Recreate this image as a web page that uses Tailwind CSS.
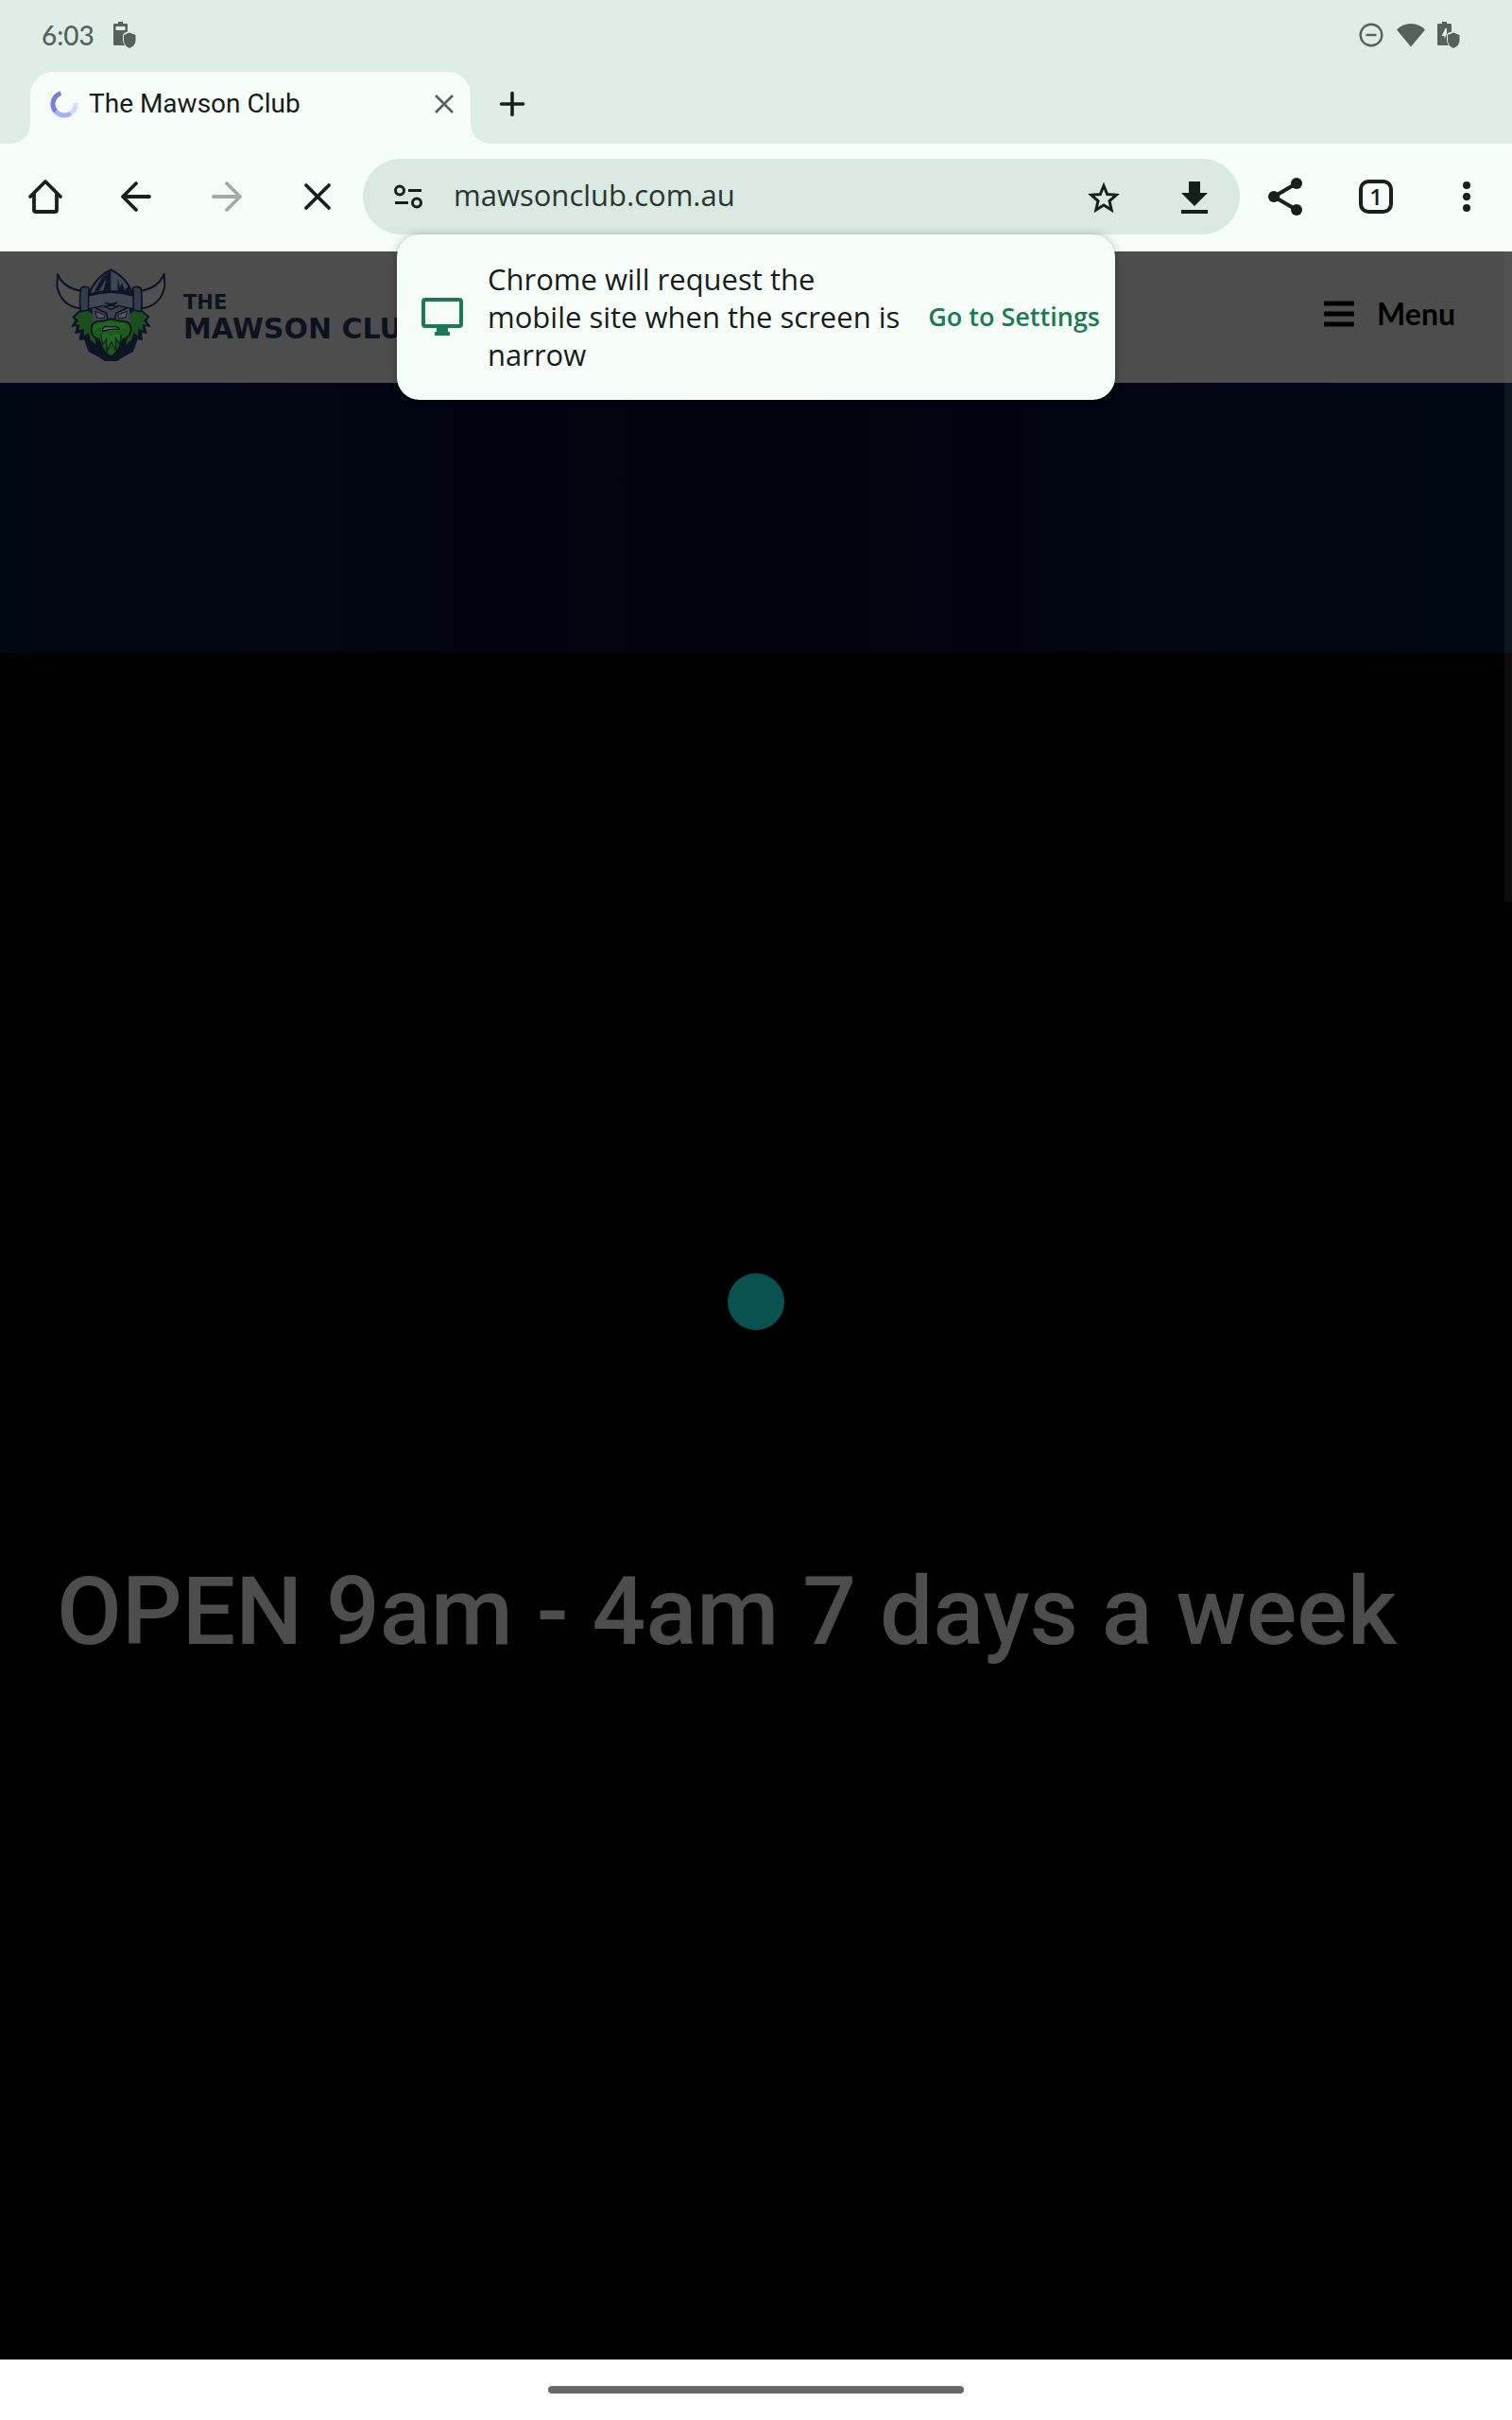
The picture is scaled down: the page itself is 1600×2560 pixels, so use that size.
<!DOCTYPE html>
<html lang="en">
<head>
<meta charset="utf-8">
<meta name="viewport" content="width=device-width, initial-scale=1">
<title>The Mawson Club</title>
<script src="https://cdn.jsdelivr.net/npm/@tailwindcss/browser@4"></script>
</head>
<body class="flex min-h-screen flex-col bg-white font-['Open_Sans',sans-serif] text-[#171d1a]">

<!-- System status bar -->
<div class="flex h-[76px] items-center justify-between bg-[#deede5] pr-[55px] pb-[2px] pl-11 text-[#55625c]">
  <div class="flex items-center gap-5">
    <span class="font-['Lato',sans-serif] text-[28px] leading-8 font-medium">6:03</span>
    <svg class="h-7 w-6" viewBox="0 0 24 28" fill="currentColor" aria-hidden="true">
      <path fill-rule="evenodd" d="M5 0h5v2h4q1 0 1 1v7.500q-5 1.500-5 4v5q0 3 2 5.500H1q-1 0-1-1V3q0-1 1-1h4zM2.500 5v4h10V5z"/>
      <path d="M17 11.500 23.500 14v6q0 5-6.500 8-6-3-6-8v-6z"/>
    </svg>
  </div>
  <div class="flex items-center gap-3">
    <svg class="h-7 w-7" viewBox="0 0 28 28" fill="none" stroke="currentColor" stroke-width="2.400" aria-hidden="true"><circle cx="14" cy="14" r="11.300"/><path d="M8.500 14h11"/></svg>
    <svg class="h-7 w-8" viewBox="0 0 32 28" fill="currentColor" aria-hidden="true"><path d="M16 26.500 1 8.500Q7 2 16 2t15 6.500z"/></svg>
    <svg class="h-7 w-6" viewBox="0 0 24 28" fill="currentColor" aria-hidden="true">
      <path fill-rule="evenodd" d="M5 0h5v2h4q1 0 1 1v7.500q-5 1.500-5 4v5q0 3 2 5.500H1q-1 0-1-1V3q0-1 1-1h4zM8.500 7 4.500 15h3v3l2.500-5V7z"/>
      <path d="M17 11.500 23.500 14v6q0 5-6.500 8-6-3-6-8v-6z"/>
    </svg>
  </div>
</div>

<!-- Tab strip -->
<div class="flex h-[76px] items-end bg-[#deede5] pl-2">
  <svg class="h-6 w-6 fill-[#f6fcf7]" viewBox="0 0 24 24" aria-hidden="true"><path d="M24 0v24H0Q24 24 24 0z"/></svg>
  <div class="flex h-full w-[466px] items-center rounded-t-3xl bg-[#f6fcf7] pr-3 pb-2 pl-5">
    <svg class="h-8 w-8" viewBox="0 0 32 32" fill="none" stroke-width="5" aria-hidden="true">
      <path d="M12.500 4.600A12 12 0 0 0 7 24" stroke="#7680dc"/>
      <path d="M7 24A12 12 0 0 0 23 25.700" stroke="#a5b0f2"/>
      <path d="M23 25.700A12 12 0 0 0 28 15" stroke="#d3dbf7"/>
    </svg>
    <span class="ml-[10px] flex-1 font-['Roboto',sans-serif] text-[28px] leading-10 whitespace-nowrap">The Mawson Club</span>
    <button type="button" aria-label="Close tab" class="flex h-8 w-8 items-center justify-center text-[#55605a]">
      <svg class="h-6 w-6" viewBox="0 0 24 24" fill="none" stroke="currentColor" stroke-width="2.600" aria-hidden="true"><path d="m3 3 18 18M21 3 3 21"/></svg>
    </button>
  </div>
  <svg class="h-6 w-6 fill-[#f6fcf7]" viewBox="0 0 24 24" aria-hidden="true"><path d="M0 0v24h24Q0 24 0 0z"/></svg>
  <button type="button" aria-label="New tab" class="flex h-full w-10 items-center justify-center pb-2">
    <svg class="h-7 w-7" viewBox="0 0 28 28" fill="none" stroke="#14201b" stroke-width="3.600" stroke-linecap="round" aria-hidden="true"><path d="M14 2.500v23M2.500 14h23"/></svg>
  </button>
</div>

<!-- Toolbar -->
<header class="relative z-10 flex h-[114px] items-center bg-[#f6fcf7] pb-[2px]">
  <button type="button" aria-label="Home" class="flex h-20 w-24 items-center justify-center">
    <svg class="h-10 w-10" viewBox="0 0 40 40" fill="none" stroke="#1a1f1c" stroke-width="3.800" stroke-linejoin="round" stroke-linecap="round" aria-hidden="true"><path d="M4 20 20 4l16 16M8 17v17q0 2 2 2h20q2 0 2-2V17"/></svg>
  </button>
  <button type="button" aria-label="Back" class="flex h-20 w-24 items-center justify-center">
    <svg class="h-9 w-9" viewBox="0 0 36 36" fill="none" stroke="#1a1f1c" stroke-width="3.800" stroke-linejoin="round" stroke-linecap="round" aria-hidden="true"><path d="M32 18H4M18 4 4 18l14 14"/></svg>
  </button>
  <button type="button" aria-label="Forward" disabled class="flex h-20 w-24 items-center justify-center">
    <svg class="h-9 w-9" viewBox="0 0 36 36" fill="none" stroke="#a4aaa6" stroke-width="3.800" stroke-linejoin="round" stroke-linecap="round" aria-hidden="true"><path d="M4 18h28M18 4l14 14-14 14"/></svg>
  </button>
  <button type="button" aria-label="Stop loading" class="flex h-20 w-24 items-center justify-center">
    <svg class="h-9 w-9" viewBox="0 0 36 36" fill="none" stroke="#1a1f1c" stroke-width="3.800" stroke-linecap="round" aria-hidden="true"><path d="m6 6 24 24M30 6 6 30"/></svg>
  </button>
  <div class="flex h-20 min-w-0 flex-1 items-center rounded-full bg-[#daeae2]">
    <button type="button" aria-label="Site information" class="flex h-20 w-24 shrink-0 items-center justify-center">
      <svg class="h-7 w-8" viewBox="0 0 32 28" fill="none" stroke="#14201b" stroke-width="3" aria-hidden="true"><circle cx="7" cy="7.500" r="4.500"/><path d="M16 7.500h14M2 20.500h14"/><circle cx="25" cy="20.500" r="4.500"/></svg>
    </button>
    <input type="text" aria-label="Address" value="mawsonclub.com.au" class="h-16 min-w-0 flex-1 bg-transparent pb-1 text-[31px] leading-10 text-[#2b3530] outline-none">
    <button type="button" aria-label="Bookmark" class="flex h-20 w-24 shrink-0 items-center justify-center">
      <svg class="h-10 w-10" viewBox="0 0 40 40" fill="none" stroke="#14201b" stroke-width="3" aria-hidden="true"><path d="m20 8.500 3.700 9 9.600.8-7.300 6.300 2.200 9.400-8.200-5-8.200 5L14 24.600l-7.300-6.300 9.600-.8z"/></svg>
    </button>
    <button type="button" aria-label="Download" class="flex h-20 w-24 shrink-0 items-center justify-center">
      <svg class="h-9 w-9" viewBox="0 0 36 36" fill="#14201b" aria-hidden="true"><path d="M12 2h12v12h8L18 28 4 14h8zM4 32h28v4H4z"/></svg>
    </button>
  </div>
  <button type="button" aria-label="Share" class="flex h-20 w-24 items-center justify-center">
    <svg class="h-10 w-10" viewBox="0 0 40 40" fill="#1a1f1c" stroke="#1a1f1c" aria-hidden="true"><path d="M32 6 8 20l24 14" fill="none" stroke-width="4"/><g stroke="none"><circle cx="32" cy="6" r="6"/><circle cx="8" cy="20" r="6"/><circle cx="32" cy="34" r="6"/></g></svg>
  </button>
  <button type="button" aria-label="Switch tabs" class="flex h-20 w-24 items-center justify-center">
    <span class="flex h-9 w-9 items-center justify-center rounded-[10px] border-4 border-[#1a1f1c] text-2xl leading-none font-semibold">1</span>
  </button>
  <button type="button" aria-label="More options" class="flex h-20 w-24 items-center justify-center">
    <svg class="h-9 w-9" viewBox="0 0 36 36" fill="#1a1f1c" aria-hidden="true"><circle cx="18" cy="6" r="4"/><circle cx="18" cy="18" r="4"/><circle cx="18" cy="30" r="4"/></svg>
  </button>

  <!-- Message card -->
  <div role="status" class="absolute top-24 left-1/2 flex h-[175px] w-[760px] -translate-x-1/2 items-center rounded-3xl bg-[#f6fcf7] pr-4 pb-[2px] pl-6 shadow-[0_0_8px_rgba(0,0,0,0.25)]">
    <svg class="h-12 w-12 shrink-0" viewBox="0 0 48 48" fill="#1b7a54" aria-hidden="true"><path fill-rule="evenodd" d="M6 4h36q4 0 4 4v24q0 4-4 4H30v4h2v4H16v-4h2v-4H6q-4 0-4-4V8q0-4 4-4zm0 4v24h36V8z"/></svg>
    <p class="ml-6 flex-1 text-[31px] leading-10">Chrome will request the<br>mobile site when the screen is<br>narrow</p>
    <button type="button" class="shrink-0 text-[27px] leading-10 font-semibold text-[#1b7a54]">Go to Settings</button>
  </div>
</header>

<!-- Web page -->
<main class="relative flex flex-1 flex-col bg-black">
  <div class="flex h-[139px] items-center justify-between bg-[#4d4d4d] pr-[60px] pb-2 pl-[58px]">
    <a href="#" class="flex items-center gap-4 text-[#0d131e]">
      <svg class="h-[100px] w-[120px]" viewBox="55 50 360 300" stroke-linejoin="round" aria-hidden="true">
        <g fill="#505050" stroke="#0c1220" stroke-width="6">
          <path d="M64 74Q82 118 139 127L137 183Q74 175 62 112Z"/>
          <path d="M402 74Q384 118 327 127L330 183Q392 175 404 112Z"/>
        </g>
        <path d="M134 187 110 210l9 11-13 20 18-1-6 24 17-4-3 24 16-2 14 38 32 17 39 26 39-26 32-17 14-38 16 2-3-24 17 4-6-24 18 1-13-20 9-11-24-23-50-8H184z" fill="#0d1422"/>
        <path d="m136 193-18 18 13 10-12 14 15-1-3 19 16-6 1 23 14-10 6 22 18 16-8-46 8-44-30-19zM331 193l18 18-13 10 12 14-15-1 3 19-16-6-1 23-14-10-6 22-18 16 8-46-8-44 30-19z" fill="#1c4f20"/>
        <path d="M174 180H292L294 232 234 222 174 232Z" fill="#3d434d"/>
        <path d="M138 118q14-8 25 0l-1 70-24 5q-7-30 0-75zM328 118q-14-8-25 0l1 70 24 5q7-30 0-75z" fill="#343b48" stroke="#0c1220" stroke-width="5"/>
        <path d="M164 139Q180 86 233 60Q286 86 302 139Q265 126 233 129Q201 126 164 139Z" fill="#3e4652" stroke="#0c1220" stroke-width="6"/>
        <path d="M233 62v71l-26 1 13-49-25 42-15 4 24-46zM255 83l-1 52 46 3-12-25-11 12-9-24-7 16z" fill="#101827"/>
        <path d="M162 143q71-22 142 0v41l-47-10-23 12-24-12-48 10z" fill="#404854" stroke="#0c1220" stroke-width="4"/>
        <path d="M215 165q19 9 38 0M213 178q20-9 42 0M184 181l34 16 5 19M284 181l-34 16-5 19" fill="none" stroke="#0c1220" stroke-width="5"/>
        <path d="m184 192 29 12-3 10-22-2zM284 192l-29 12 3 10 22-2z" fill="#55585d" stroke="#0c1220" stroke-width="3"/>
        <path d="M171 252q-2-31 35-29l27-7 28 7q38-2 36 29-4 24-25 28l-9 19-10 20-20 18-20-18-11-20-8-19q-20-4-23-28z" fill="#1d5a1e" stroke="#0c1220" stroke-width="5"/>
        <path d="M178 251q5-23 31-22l24-5 25 5q27-1 31 22l-24-7-16 11h-35l-15-11z" fill="#226420"/>
        <path d="M207 248q4-9 14-7h24q12-1 14 8-26-3-52 6z" fill="#65696b" stroke="#0c1220" stroke-width="4"/>
        <path d="m201 266 6 31 12-19 1 43 15-33 15 33-2-44 13 21 5-33-19-2-14 9-13-10z" fill="#236820"/>
        <path d="m201 266 6 31 12-19 1 43 15-33 15 33-2-44 13 21 5-33" fill="none" stroke="#0f241b" stroke-width="4"/>
      </svg>
      <span class="flex flex-col pt-2 font-['DejaVu_Sans',sans-serif] font-bold">
        <span class="text-[21px] leading-6">THE</span>
        <span class="text-[30px] leading-8 whitespace-nowrap">MAWSON CLUB</span>
      </span>
    </a>
    <button type="button" class="flex items-center gap-6 font-['Lato',sans-serif] text-[32px] leading-10 font-bold text-black">
      <svg class="h-8 w-8" viewBox="0 0 32 32" fill="none" stroke="currentColor" stroke-width="5" aria-hidden="true"><path d="M0 5h32M0 16h32M0 27h32"/></svg>
      Menu
    </button>
  </div>
  <section class="h-[286px] bg-linear-to-r from-[#000812] via-[#02030d] to-[#000913]"></section>
  <section class="aspect-video bg-black"></section>
  <section class="px-[60px] pt-[54px]">
    <h1 class="font-['Roboto',sans-serif] text-[100px] leading-[120px] font-medium text-[#4d4d4d]">OPEN 9am - 4am 7 days a week</h1>
  </section>

  <!-- Page loader -->
  <div class="pointer-events-none absolute inset-0 flex items-center justify-center pb-2">
    <span class="h-[60px] w-[60px] rounded-full bg-[#0a5250]"></span>
  </div>
  <!-- Scroll indicator -->
  <div class="absolute top-0 right-0 h-[688px] w-2 bg-[#808080]/10"></div>
</main>

<!-- Gesture bar -->
<footer class="flex h-16 items-center justify-center bg-white">
  <div class="h-2 w-[440px] rounded-full bg-[#686868]"></div>
</footer>
</body>
</html>
